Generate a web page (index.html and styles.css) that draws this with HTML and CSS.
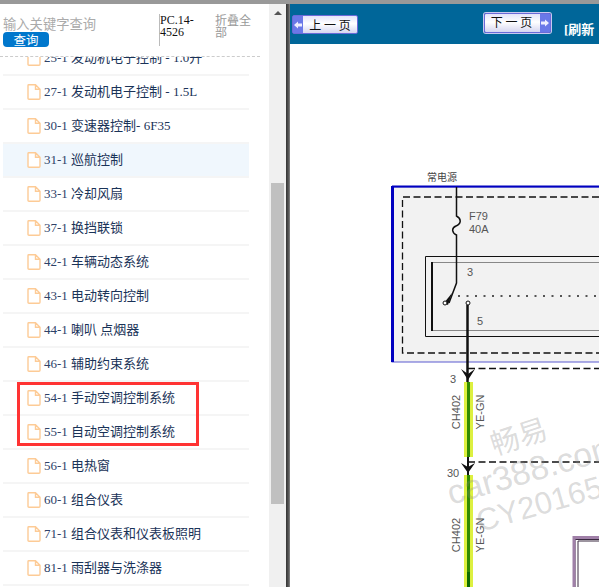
FILE: index.html
```html
<!DOCTYPE html>
<html lang="zh">
<head>
<meta charset="utf-8">
<title>维修手册</title>
<link rel="stylesheet" href="styles.css">
</head>
<body>
<div class="topbar"></div>
<div class="layout">
  <aside class="side">
    <div class="side-content">
      <header class="search">
        <div class="search-box">
          <div class="placeholder">输入关键字查询</div>
          <button class="query">查询</button>
        </div>
        <div class="code">PC.14-4526</div>
        <div class="fold">折叠全部</div>
      </header>
      <div class="tree-wrap">
        <ul class="tree">
          <li class="row"><svg class="doc" viewBox="0 0 14 16"><path d="M1 1.5 Q1 .8 1.8 .8 H8.5 L13 5.3 V14.2 Q13 15.2 12 15.2 H2 Q1 15.2 1 14.2 Z M8.5 .8 V5.3 H13"/></svg><span class="text"><span class="num">25-1</span> 发动机电子控制 - 1.0升</span></li>
          <li class="row"><svg class="doc" viewBox="0 0 14 16"><path d="M1 1.5 Q1 .8 1.8 .8 H8.5 L13 5.3 V14.2 Q13 15.2 12 15.2 H2 Q1 15.2 1 14.2 Z M8.5 .8 V5.3 H13"/></svg><span class="text"><span class="num">27-1</span> 发动机电子控制 - 1.5L</span></li>
          <li class="row"><svg class="doc" viewBox="0 0 14 16"><path d="M1 1.5 Q1 .8 1.8 .8 H8.5 L13 5.3 V14.2 Q13 15.2 12 15.2 H2 Q1 15.2 1 14.2 Z M8.5 .8 V5.3 H13"/></svg><span class="text"><span class="num">30-1</span> 变速器控制- 6F35</span></li>
          <li class="row active"><svg class="doc" viewBox="0 0 14 16"><path d="M1 1.5 Q1 .8 1.8 .8 H8.5 L13 5.3 V14.2 Q13 15.2 12 15.2 H2 Q1 15.2 1 14.2 Z M8.5 .8 V5.3 H13"/></svg><span class="text"><span class="num">31-1</span> 巡航控制</span></li>
          <li class="row"><svg class="doc" viewBox="0 0 14 16"><path d="M1 1.5 Q1 .8 1.8 .8 H8.5 L13 5.3 V14.2 Q13 15.2 12 15.2 H2 Q1 15.2 1 14.2 Z M8.5 .8 V5.3 H13"/></svg><span class="text"><span class="num">33-1</span> 冷却风扇</span></li>
          <li class="row"><svg class="doc" viewBox="0 0 14 16"><path d="M1 1.5 Q1 .8 1.8 .8 H8.5 L13 5.3 V14.2 Q13 15.2 12 15.2 H2 Q1 15.2 1 14.2 Z M8.5 .8 V5.3 H13"/></svg><span class="text"><span class="num">37-1</span> 换挡联锁</span></li>
          <li class="row"><svg class="doc" viewBox="0 0 14 16"><path d="M1 1.5 Q1 .8 1.8 .8 H8.5 L13 5.3 V14.2 Q13 15.2 12 15.2 H2 Q1 15.2 1 14.2 Z M8.5 .8 V5.3 H13"/></svg><span class="text"><span class="num">42-1</span> 车辆动态系统</span></li>
          <li class="row"><svg class="doc" viewBox="0 0 14 16"><path d="M1 1.5 Q1 .8 1.8 .8 H8.5 L13 5.3 V14.2 Q13 15.2 12 15.2 H2 Q1 15.2 1 14.2 Z M8.5 .8 V5.3 H13"/></svg><span class="text"><span class="num">43-1</span> 电动转向控制</span></li>
          <li class="row"><svg class="doc" viewBox="0 0 14 16"><path d="M1 1.5 Q1 .8 1.8 .8 H8.5 L13 5.3 V14.2 Q13 15.2 12 15.2 H2 Q1 15.2 1 14.2 Z M8.5 .8 V5.3 H13"/></svg><span class="text"><span class="num">44-1</span> 喇叭 点烟器</span></li>
          <li class="row"><svg class="doc" viewBox="0 0 14 16"><path d="M1 1.5 Q1 .8 1.8 .8 H8.5 L13 5.3 V14.2 Q13 15.2 12 15.2 H2 Q1 15.2 1 14.2 Z M8.5 .8 V5.3 H13"/></svg><span class="text"><span class="num">46-1</span> 辅助约束系统</span></li>
          <li class="row"><svg class="doc" viewBox="0 0 14 16"><path d="M1 1.5 Q1 .8 1.8 .8 H8.5 L13 5.3 V14.2 Q13 15.2 12 15.2 H2 Q1 15.2 1 14.2 Z M8.5 .8 V5.3 H13"/></svg><span class="text"><span class="num">54-1</span> 手动空调控制系统</span></li>
          <li class="row"><svg class="doc" viewBox="0 0 14 16"><path d="M1 1.5 Q1 .8 1.8 .8 H8.5 L13 5.3 V14.2 Q13 15.2 12 15.2 H2 Q1 15.2 1 14.2 Z M8.5 .8 V5.3 H13"/></svg><span class="text"><span class="num">55-1</span> 自动空调控制系统</span></li>
          <li class="row"><svg class="doc" viewBox="0 0 14 16"><path d="M1 1.5 Q1 .8 1.8 .8 H8.5 L13 5.3 V14.2 Q13 15.2 12 15.2 H2 Q1 15.2 1 14.2 Z M8.5 .8 V5.3 H13"/></svg><span class="text"><span class="num">56-1</span> 电热窗</span></li>
          <li class="row"><svg class="doc" viewBox="0 0 14 16"><path d="M1 1.5 Q1 .8 1.8 .8 H8.5 L13 5.3 V14.2 Q13 15.2 12 15.2 H2 Q1 15.2 1 14.2 Z M8.5 .8 V5.3 H13"/></svg><span class="text"><span class="num">60-1</span> 组合仪表</span></li>
          <li class="row"><svg class="doc" viewBox="0 0 14 16"><path d="M1 1.5 Q1 .8 1.8 .8 H8.5 L13 5.3 V14.2 Q13 15.2 12 15.2 H2 Q1 15.2 1 14.2 Z M8.5 .8 V5.3 H13"/></svg><span class="text"><span class="num">71-1</span> 组合仪表和仪表板照明</span></li>
          <li class="row"><svg class="doc" viewBox="0 0 14 16"><path d="M1 1.5 Q1 .8 1.8 .8 H8.5 L13 5.3 V14.2 Q13 15.2 12 15.2 H2 Q1 15.2 1 14.2 Z M8.5 .8 V5.3 H13"/></svg><span class="text"><span class="num">81-1</span> 雨刮器与洗涤器</span></li>
        </ul>
      </div>
    </div>
    <div class="scrollbar">
      <div class="arrow-up"></div>
      <div class="thumb"></div>
    </div>
    <div class="highlight"></div>
  </aside>
  <div class="splitter"></div>
  <main class="viewer">
    <div class="toolbar">
      <a class="page-btn prev"><span class="chip"><svg class="chip-arrow" viewBox="0 0 8 8"><path d="M0 4 L4 .5 V2.500 H8 V5.500 H4 V7.500 Z"/></svg></span><span class="btn-label">上 一 页</span></a>
      <a class="page-btn next"><span class="btn-label">下 一 页</span><span class="chip"><svg class="chip-arrow" viewBox="0 0 8 8"><path d="M8 4 L4 .5 V2.500 H0 V5.500 H4 V7.500 Z"/></svg></span></a>
      <span class="refresh">[刷新</span>
    </div>
    <svg class="diagram" viewBox="290 44 309 543" width="309" height="543">
      <rect x="392" y="187" width="220" height="175" fill="#f2f2f2" stroke="#5a5ad0" stroke-width="1"/>
      <path d="M392 186.500 H599" stroke="#0000c0" stroke-width="2" fill="none"/>
      <path d="M392.500 186 V362" stroke="#0000c0" stroke-width="3" fill="none"/>
      <path d="M599 197 H402.500 V353 H599" fill="none" stroke="#111" stroke-width="1.300" stroke-dasharray="7 3.500"/>
      <path d="M599 256.500 H425.500 V336.500 H599" fill="none" stroke="#111" stroke-width="1"/>
      <path d="M599 262.500 H432 V330.500 H599" fill="none" stroke="#888" stroke-width="1"/>
      <path d="M432 262 V331" stroke="#111" stroke-width="2"/>
      <path d="M456.500 187 V216 C462 219 461 224 456 226 C451 228 452 233 456.500 235 V283 L449 303" fill="none" stroke="#111" stroke-width="1.500"/>
      <path d="M452 293 L448 305 L444 303 Z" fill="#111"/>
      <circle cx="445" cy="303" r="2" fill="#fff" stroke="#111"/>
      <circle cx="468" cy="303" r="2" fill="#fff" stroke="#111"/>
      <path d="M458 296 H599" stroke="#222" stroke-width="1.500" stroke-dasharray="2 6.500"/>
      <path d="M467.500 305 V382" stroke="#111" stroke-width="2.500"/>
      <path d="M468 368.500 H599" stroke="#111" stroke-width="1.300" stroke-dasharray="7 3.500"/>
      <path d="M468 462 H599" stroke="#111" stroke-width="1.300" stroke-dasharray="7 3.500"/>
      <path d="M461 369 L468 374 L475 369 L468 380 Z" fill="#111"/>
      <path d="M461 463 L468 467 L475 463 L468 473 Z" fill="#111"/>
      <path d="M468 457 V475" stroke="#111" stroke-width="2"/>
      <rect x="464" y="382" width="9" height="75" fill="#ddf040"/>
      <rect x="464" y="475" width="9" height="112" fill="#ddf040"/>
      <rect x="467" y="382" width="3" height="75" fill="#2f8a00"/>
      <rect x="467" y="475" width="3" height="112" fill="#2f8a00"/>
      <rect x="467" y="572" width="3" height="15" fill="#0c6a00"/>
      <path d="M599 539.500 H575 V587 M599 541 H578 V587" fill="none" stroke="#3a2a40" stroke-width="1"/>
      <path d="M599 537.500 H574 V587" fill="none" stroke="#a080a8" stroke-width="3"/>
      <text class="label-cn" x="427" y="181">常电源</text>
      <text class="label" x="469" y="220">F79</text>
      <text class="label" x="469" y="233">40A</text>
      <text class="label" x="467" y="276">3</text>
      <text class="label" x="477" y="325">5</text>
      <text class="label" x="450" y="383">3</text>
      <text class="label" x="447" y="477">30</text>
      <text class="label rot" transform="translate(460 412) rotate(-90)">CH402</text>
      <text class="label rot" transform="translate(484 412) rotate(-90)">YE-GN</text>
      <text class="label rot" transform="translate(460 535) rotate(-90)">CH402</text>
      <text class="label rot" transform="translate(484 535) rotate(-90)">YE-GN</text>
      <text class="wm-cn" x="519" y="447" transform="rotate(-18 519 437)">畅易</text>
      <text class="wm-en" x="451" y="505" transform="rotate(-16 451 505)">car388.com</text>
      <text class="wm-id" x="480" y="532" transform="rotate(-16 480 532)">CY20165</text>
    </svg>
  </main>
</div>
</body>
</html>
```
FILE: styles.css
```css
* { box-sizing: border-box; }
html, body { margin: 0; height: 100%; overflow: hidden; background: #fff; }
body {
  display: flex;
  flex-direction: column;
  font-family: "Liberation Serif", "Noto Sans CJK SC", serif;
  font-size: 13px;
}
.topbar { height: 4px; background: #999; flex: none; }
.layout { flex: 1; display: flex; min-height: 0; }

.side { width: 286px; flex: none; display: flex; position: relative; }
.side-content { width: 269px; flex: none; display: flex; flex-direction: column; min-height: 0; }
.search {
  flex: none;
  display: flex;
  align-items: flex-start;
  padding: 10px 0 0 3px;
  border-bottom: 1px dashed #ccc;
  width: 260px;
  height: 53px;
}
.search-box { width: 156px; flex: none; }
.placeholder { color: #aaa; font-family: "Noto Sans CJK SC", sans-serif; font-size: 13.300px; line-height: 17px; margin-top: 1px; }
.query {
  display: block;
  width: 46px;
  height: 15px;
  padding: 0;
  border: 0;
  border-radius: 4px;
  background: #0077cc;
  color: #fff;
  font-family: "Noto Sans CJK SC", sans-serif;
  font-size: 12.500px;
  line-height: 15px;
}
.code {
  width: 56px;
  height: 32px;
  flex: none;
  border-left: 1px solid #bbb;
  color: #111;
  font-size: 12px;
  line-height: 12px;
  padding: 0 20px 0 0;
}
.fold {
  width: 36px;
  flex: none;
  color: #999;
  font-family: "Noto Sans CJK SC", sans-serif;
  font-size: 12px;
  line-height: 12px;
}
.tree-wrap { flex: 1; overflow: hidden; min-height: 0; }
.tree { list-style: none; margin: -15px 0 0 3px; padding: 0; width: 246px; }
.row {
  height: 34px;
  display: flex;
  align-items: center;
  white-space: pre;
  padding: 0 0 4px 24px;
  border-bottom: 2px solid #f5f5f5;
  color: #1a3358;
  font-size: 13px;
  font-family: "Liberation Serif", "Noto Sans CJK SC", serif;
}
.row.active { background: #f0f7fd; }
.num { color: #2e4268; }
.doc { width: 14px; height: 16px; flex: none; margin: 3px 3px 0 0; fill: #fff; stroke: #fdcb96; stroke-width: 1.400; }
.scrollbar { width: 17px; flex: none; background: #f0f0f0; padding: 0 2px; display: flex; flex-direction: column; align-items: stretch; }
.arrow-up {
  width: 0;
  height: 0;
  align-self: center;
  margin-top: 7px;
  border-left: 4px solid transparent;
  border-right: 4px solid transparent;
  border-bottom: 4px solid #555;
}
.thumb { height: 321px; margin-top: 168px; background: #c0c0c0; }
.highlight { position: absolute; left: 17px; top: 378px; width: 182px; height: 64px; border: 3px solid #f33; }

.splitter { width: 4px; flex: none; background: linear-gradient(to right, #333, #555 60%, #888); }
.viewer { flex: 1; min-width: 0; display: flex; flex-direction: column; overflow: hidden; }
.toolbar {
  height: 40px;
  flex: none;
  display: flex;
  align-items: flex-start;
  background: #006699;
  padding-left: 2px;
  overflow: hidden;
}
.page-btn {
  display: flex;
  align-items: center;
  height: 19px;
  flex: none;
  border: 1px solid #6a6ad8;
  border-radius: 2px;
  background: linear-gradient(to bottom, #e4e4fa, #fff 45%, #d6d6f0);
  color: #111;
  font-family: "Noto Sans CJK SC", sans-serif;
  font-size: 12px;
  line-height: 14px;
}
.prev { width: 66px; margin-top: 11px; }
.next { width: 67px; margin-top: 9px; margin-left: 126px; height: 20px; box-shadow: 0 0 0 1px #c8c8f0; }
.next .btn-label { padding: 0 2px 2px 0; }
.chip {
  width: 10px;
  align-self: stretch;
  flex: none;
  display: flex;
  align-items: center;
  justify-content: center;
  background: #6a78e8;
}
.chip-arrow { width: 8px; height: 8px; fill: #eef; }
.btn-label { flex: 1; text-align: center; white-space: pre; }
.refresh {
  margin: 17px 0 0 13px;
  flex: none;
  color: #fff;
  font-weight: bold;
  font-size: 13px;
  line-height: 18px;
  white-space: pre;
}
.diagram { display: block; flex: none; }
.label { font-family: "Liberation Sans", sans-serif; font-size: 11px; fill: #555; }
.label-cn { font-family: "Noto Sans CJK SC", sans-serif; font-size: 10px; fill: #444; }
.rot { text-anchor: middle; }
.wm-cn { font-family: "Noto Sans CJK SC", sans-serif; font-size: 29px; fill: #888; fill-opacity: .3; text-anchor: middle; }
.wm-en { font-family: "Liberation Sans", sans-serif; font-size: 34px; fill: #888; fill-opacity: .3; }
.wm-id { font-family: "Liberation Sans", sans-serif; font-size: 31px; fill: #888; fill-opacity: .3; }
```
